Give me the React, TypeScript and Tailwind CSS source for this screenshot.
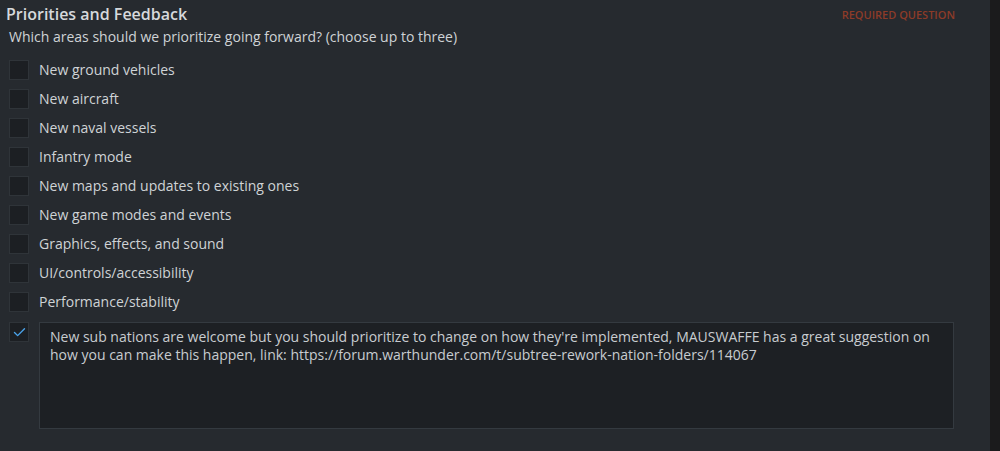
import { Check } from 'lucide-react';

const OPTIONS = [
  'New ground vehicles',
  'New aircraft',
  'New naval vessels',
  'Infantry mode',
  'New maps and updates to existing ones',
  'New game modes and events',
  'Graphics, effects, and sound',
  'UI/controls/accessibility',
  'Performance/stability',
];

const OTHER_TEXT =
  "New sub nations are welcome but you should prioritize to change on how they're implemented, MAUSWAFFE has a great suggestion on how you can make this happen, link: https://forum.warthunder.com/t/subtree-rework-nation-folders/114067";

export default function App() {
  return (
    <div className="flex h-[451px] w-[1000px] bg-[#1b1b1c] font-['Open_Sans',sans-serif]">
      <div className="w-[990px] bg-[#262a2f] pt-[3px]">
        <div className="flex items-start justify-between pl-[6px] pr-[35px]">
          <h2 className="text-[16px] font-semibold leading-[22px] text-[#d6d9dc]">
            Priorities and Feedback
          </h2>
          <span className="pt-[4px] text-[11px] font-semibold uppercase leading-[16px] text-[#8d3b28]">
            Required question
          </span>
        </div>
        <p className="mt-[2px] pl-[9px] text-[14px] leading-[20px] text-[#cfd3d6]">
          Which areas should we prioritize going forward? (choose up to three)
        </p>

        <div className="mt-[13px] flex flex-col gap-[9px] pl-[9px]">
          {OPTIONS.map((o) => (
            <label key={o} className="flex h-[20px] items-center gap-[10px]">
              <span className="h-[20px] w-[20px] shrink-0 border border-[#2f3439] bg-[#1c1f23]" />
              <span className="text-[14px] leading-[20px] text-[#cfd3d6]">{o}</span>
            </label>
          ))}

          <div className="mt-[1px] flex items-start gap-[10px]">
            <span className="flex h-[20px] w-[20px] shrink-0 items-center justify-center border border-[#2f3439] bg-[#1c1f23] text-[#4aa3ea]">
              <Check size={15} strokeWidth={2.25} />
            </span>
            <div className="h-[107px] w-[915px] border border-[#343a40] bg-[#1d2024] px-[10px] pt-[5px] text-[14px] leading-[18px] text-[#c8ccd0]">
              {OTHER_TEXT}
            </div>
          </div>
        </div>
      </div>
    </div>
  );
}
